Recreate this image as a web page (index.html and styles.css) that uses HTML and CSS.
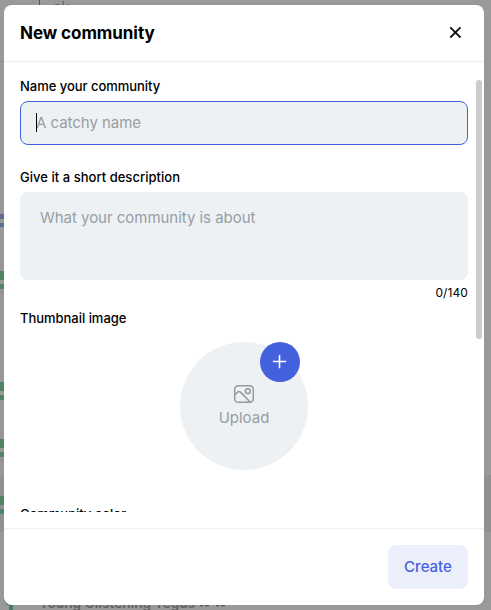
FILE: index.html
```html
<!DOCTYPE html>
<html lang="en">
<head>
<meta charset="utf-8">
<title>New community</title>
<link rel="stylesheet" href="styles.css">
</head>
<body>
<div class="backdrop" aria-hidden="true">
  <span class="rule"></span>
  <span class="peek peek-top">ok</span>
  <span class="band"></span>
  <svg class="edge" width="5" height="610" viewBox="0 0 5 610">
    <g fill="#5b6d8c"><rect y="214" width="5" height="5"/><rect y="223" width="5" height="4"/></g>
    <g fill="#4f8465"><rect y="271" width="5" height="9"/><rect y="284" width="5" height="5"/><rect y="382" width="5" height="9"/><rect y="395" width="5" height="5"/><rect y="439" width="5" height="9"/><rect y="452" width="5" height="5"/><rect y="496" width="5" height="9"/><rect y="509" width="5" height="5"/></g>
    <path d="M0 61l5 1M0 90l5 3M0 209l5-4M0 233l5 4M0 266l5-4M0 290l5 4M0 377l5-4M0 401l5 4M0 434l5-4M0 458l5 4M0 491l5-4M0 515l5 4" stroke="#8c8c8c" fill="none"/>
  </svg>
  <svg class="sprout" width="24" height="12" viewBox="0 0 24 12"><path d="M4 0h6v5H7z M9 5h4v5H9z" fill="#477d66"/></svg>
  <span class="peek peek-bottom">Young Glistening Tegus</span>
  <svg class="eyes" width="30" height="6" viewBox="0 0 30 6"><path d="M1 1.5h3M6 1.5h4M17 1.5h3M22 1.5h4" stroke="#555" stroke-width="1.6"/></svg>
</div>
<section class="modal" role="dialog">
  <header class="head">
    <h1>New community</h1>
    <svg class="close" width="24" height="24" viewBox="0 0 24 24"><path d="M6.3 6.3l10.2 10.2M16.5 6.3L6.3 16.5" stroke="#111" stroke-width="1.8" fill="none"/></svg>
  </header>
  <div class="body">
    <div class="scroll">
      <label class="label">Name your community</label>
      <div class="input"><span class="caret"></span>A catchy name</div>
      <label class="label label-desc">Give it a short description</label>
      <div class="textarea">What your community is about</div>
      <div class="count">0/140</div>
      <label class="label label-thumb">Thumbnail image</label>
      <div class="upload">
        <svg width="24" height="24" viewBox="0 0 24 24" fill="none" stroke="#92989d" stroke-width="1.5" stroke-linejoin="round"><rect x="2.7" y="3.7" width="18.6" height="16.6" rx="3.6"/><circle cx="15.8" cy="9.2" r="2.4"/><path d="M2.7 12.7l3.1-2.7q1.4-1.1 2.7.1l9.9 10.1"/></svg>
        <span>Upload</span>
        <span class="plus"><svg width="40" height="40" viewBox="0 0 40 40"><path d="M13.6 19.5h12M19.5 13.6v12" stroke="#fff" stroke-width="1.6" stroke-linecap="round"/></svg></span>
      </div>
      <label class="label label-color">Community color</label>
    </div>
    <span class="thumb"></span>
  </div>
  <footer class="foot"><button class="create">Create</button></footer>
</section>
</body>
</html>
```
FILE: styles.css
```css
* { box-sizing: border-box; }
body {
  margin: 0;
  width: 491px;
  height: 610px;
  padding: 5px 7px 5px 4px;
  overflow: hidden;
  position: relative;
  background: #999;
  font-family: Inter, "Liberation Sans", sans-serif;
  color: #000;
}
.backdrop { position: absolute; inset: 0; overflow: hidden; }
.rule { position: absolute; left: 39px; top: 0; width: 1px; height: 6px; background: #555; }
.band { position: absolute; left: 0; right: 0; top: 475px; height: 57px; background: #8e9092; }
.edge { position: absolute; left: 0; top: 0; }
.sprout { position: absolute; left: 0; top: 600px; }
.eyes { position: absolute; left: 199px; top: 604px; }
.peek { position: absolute; color: #606366; white-space: nowrap; line-height: 18px; }
.peek-top { left: 53px; top: -2px; font-size: 14px; }
.peek-bottom { left: 39px; top: 594px; font-size: 13.7px; font-weight: 600; }
.modal {
  position: relative;
  display: flex;
  flex-direction: column;
  width: 480px;
  height: 600px;
  border-radius: 8px;
  background: #fff;
  overflow: hidden;
}
.head {
  display: flex;
  align-items: center;
  justify-content: space-between;
  height: 57px;
  padding: 0 16px;
  border-bottom: 1px solid #eee;
}
h1 { margin: 0; font-size: 17px; line-height: 24px; font-weight: 700; letter-spacing: -0.06px; }
.body { position: relative; height: 450px; padding-top: 15px; }
.scroll { height: 435px; padding: 0 16px; overflow: hidden; }
.label { display: block; font-size: 13px; line-height: 18px; font-weight: 500; letter-spacing: -0.03px; }
.input {
  position: relative;
  height: 44px;
  margin-top: 6px;
  padding: 0 15px;
  border: 1px solid #4361dd;
  border-radius: 8px;
  background: #edf1f4;
  color: #989ea3;
  font-size: 15px;
  line-height: 42px;
  letter-spacing: -0.04px;
}
.caret { position: absolute; left: 15px; top: 11px; width: 1px; height: 19px; background: #000; }
.label-desc { margin-top: 23px; letter-spacing: 0.03px; }
.textarea {
  height: 88px;
  margin-top: 6px;
  padding: 16px 20px;
  border-radius: 8px;
  background: #edf1f4;
  color: #989ea3;
  font-size: 15px;
  line-height: 20px;
  letter-spacing: -0.03px;
}
.count { margin-top: 4px; text-align: right; font-size: 12px; line-height: 18px; letter-spacing: 0.1px; }
.label-thumb { margin-top: 7px; }
.upload {
  position: relative;
  display: flex;
  flex-direction: column;
  align-items: center;
  width: 128px;
  height: 128px;
  margin: 15px auto 0;
  padding-top: 40px;
  border-radius: 50%;
  background: #edf1f4;
  color: #989ea3;
  font-size: 15px;
  line-height: 24px;
}
.plus { position: absolute; top: 0; right: 8px; width: 40px; height: 40px; border-radius: 50%; background: #4361dd; }
.plus svg { display: block; }
.label-color { margin-top: 35px; }
.thumb { position: absolute; left: 472px; top: 18px; width: 6px; height: 259px; border-radius: 3px; background: #ccc; }
.foot {
  display: flex;
  justify-content: flex-end;
  margin-top: 16px;
  height: 77px;
  padding: 16px 16px 0;
  border-top: 1px solid #edf1f4;
}
.create {
  width: 80px;
  height: 44px;
  padding: 0;
  border: 0;
  border-radius: 8px;
  background: #ebeffc;
  color: #4361dd;
  font: 500 15px/44px Inter, "Liberation Sans", sans-serif;
}
```
